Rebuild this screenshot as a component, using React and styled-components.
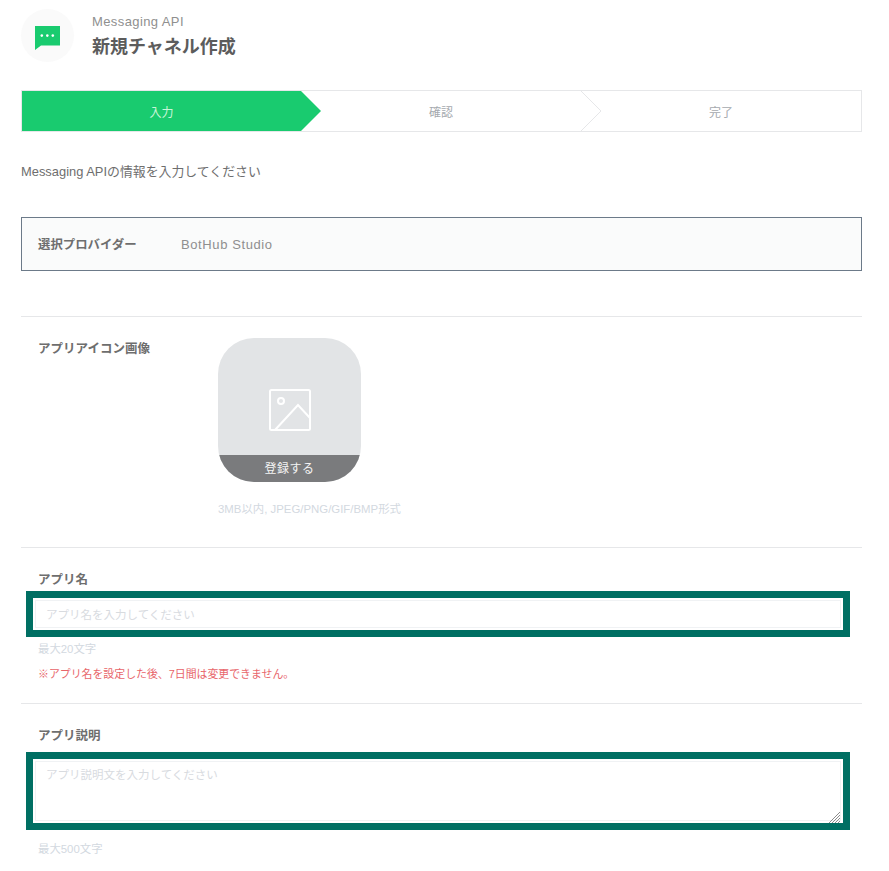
import React from "react";
import styled, { createGlobalStyle } from "styled-components";

const GlobalStyle = createGlobalStyle`
  html, body {
    margin: 0;
    padding: 0;
    background: #fff;
    font-family: "Liberation Sans", "Noto Sans CJK JP", sans-serif;
    color: #555;
  }
  * { box-sizing: border-box; }
`;

const Page = styled.div`
  width: 889px;
  height: 871px;
  overflow: hidden;
  padding: 9px 27px 0 21px;
`;

const Header = styled.header`
  display: flex;
  align-items: flex-start;
  gap: 18px;
  height: 81px;
`;

const IconCircle = styled.div`
  width: 53px;
  height: 53px;
  padding-top: 4px;
  border-radius: 50%;
  background: #fafafa;
  display: flex;
  align-items: center;
  justify-content: center;
`;

const HeaderText = styled.div`
  display: flex;
  flex-direction: column;
  padding-top: 5px;
`;

const Service = styled.div`
  font-size: 13px;
  line-height: 16px;
  letter-spacing: 0.4px;
  color: #8f8f8f;
`;

const Title = styled.h1`
  margin: 4px 0 0;
  font-size: 18px;
  line-height: 26px;
  font-weight: 700;
  color: #5c5c5c;
`;

const Stepper = styled.div`
  display: flex;
  height: 42px;
  border: 1px solid #e6e7e9;
`;

const Step = styled.div`
  position: relative;
  flex: 0 0 ${({ $width }) => $width}px;
  display: flex;
  align-items: center;
  justify-content: center;
  font-size: 12px;
  color: ${({ $active }) => ($active ? "#c9f5d9" : "#a5a9ae")};
  background: ${({ $active }) => ($active ? "#19cb6f" : "transparent")};
`;

const StepTip = styled.svg`
  position: absolute;
  top: 0;
  left: 100%;
  width: 20px;
  height: 40px;
  z-index: 1;
`;

const Intro = styled.p`
  margin: 31px 0 0;
  font-size: 12.9px;
  line-height: 18px;
  color: #6e6e6e;
`;

const ProviderBox = styled.div`
  margin-top: 36px;
  height: 54px;
  display: flex;
  align-items: center;
  padding-left: 16px;
  border: 1px solid #6c7a89;
  background: #fafbfb;
`;

const ProviderLabel = styled.div`
  width: 143px;
  font-size: 12.4px;
  font-weight: 700;
  color: #6e6e6e;
`;

const ProviderName = styled.div`
  font-size: 13px;
  letter-spacing: 0.6px;
  color: #8f8f8f;
`;

const Section = styled.section`
  border-top: 1px solid #e6e7e9;
  padding-left: 17px;
  margin-top: ${({ $top }) => $top}px;
`;

const IconRow = styled.div`
  display: flex;
  padding-top: 21px;
  height: 230px;
`;

const FieldLabel = styled.div`
  width: 180px;
  margin-top: ${({ $top }) => $top || 0}px;
  font-size: 12.5px;
  line-height: 20px;
  font-weight: 700;
  color: #6e6e6e;
`;

const UploadColumn = styled.div`
  display: flex;
  flex-direction: column;
`;

const Upload = styled.div`
  position: relative;
  width: 143px;
  height: 144px;
  border-radius: 36px;
  background: #e2e4e6;
  overflow: hidden;
  display: flex;
  flex-direction: column;
`;

const UploadImage = styled.div`
  flex: 1;
  display: flex;
  align-items: center;
  justify-content: center;
  padding-top: 27px;
`;

const UploadBar = styled.div`
  height: 27px;
  padding-bottom: 2px;
  display: flex;
  align-items: center;
  justify-content: center;
  background: #7a7b7d;
  color: #f4f4f4;
  font-size: 12px;
  letter-spacing: 0.5px;
`;

const Hint = styled.div`
  margin-top: ${({ $top }) => $top || 0}px;
  font-size: 11.4px;
  line-height: 14px;
  color: #d3d9df;
`;

const Warning = styled.div`
  margin-top: 11px;
  font-size: 10.9px;
  line-height: 14px;
  color: #e8656a;
`;

const FieldBlock = styled.div`
  padding-top: 22px;
`;

const TextInput = styled.input`
  display: block;
  width: 810px;
  height: 32px;
  margin: ${({ $gap }) => $gap}px 0 0 -5px;
  padding: 1px 11px 0;
  border: 2px solid #fff;
  box-shadow: inset 0 0 0 1px #f0f2f4;
  outline: 7px solid #006f63;
  background: #fff;
  font-family: inherit;
  font-size: 11.5px;
  &::placeholder { color: #d8dbdf; }
`;

const TextAreaWrap = styled.div`
  position: relative;
  width: 810px;
  height: 64px;
  margin: ${({ $gap }) => $gap}px 0 0 -5px;
`;

const TextArea = styled.textarea`
  display: block;
  width: 100%;
  height: 100%;
  padding: 5px 11px;
  border: 2px solid #fff;
  box-shadow: inset 0 0 0 1px #f0f2f4;
  outline: 7px solid #006f63;
  background: #fff;
  resize: none;
  font-family: inherit;
  font-size: 11.5px;
  &::placeholder { color: #d8dbdf; }
`;

const ResizeHandle = styled.svg`
  position: absolute;
  right: 3px;
  bottom: 0;
  width: 11px;
  height: 11px;
`;

const ChatIcon = () => (
  <svg width="25" height="24" viewBox="0 0 25 24">
    <path d="M0 0H25V19.5H6L0 24Z" fill="#19cb6f" />
    <circle cx="6.8" cy="9.6" r="1.3" fill="#fff" />
    <circle cx="12.3" cy="9.6" r="1.3" fill="#fff" />
    <circle cx="17.8" cy="9.6" r="1.3" fill="#fff" />
  </svg>
);

const ImageIcon = () => (
  <svg width="42" height="42" viewBox="0 0 42 42" fill="none" stroke="#fff" strokeWidth="2">
    <rect x="1" y="1" width="40" height="40" rx="1.5" />
    <circle cx="12" cy="12" r="3" />
    <path d="M6 41L29 16L41 29" />
  </svg>
);

const HandleIcon = () => (
  <ResizeHandle viewBox="0 0 11 11" stroke="#8c8c8c" strokeWidth="1">
    <path d="M0 11L11 0M3 11L11 3M6 11L11 6M9 11L11 9" />
  </ResizeHandle>
);

export default function App() {
  return (
    <>
      <GlobalStyle />
      <Page>
        <Header>
          <IconCircle>
            <ChatIcon />
          </IconCircle>
          <HeaderText>
            <Service>Messaging API</Service>
            <Title>新規チャネル作成</Title>
          </HeaderText>
        </Header>

        <Stepper>
          <Step $active $width={279}>
            入力
            <StepTip viewBox="0 0 20 40">
              <path d="M0 0L20 20L0 40Z" fill="#19cb6f" />
            </StepTip>
          </Step>
          <Step $width={280}>
            確認
            <StepTip viewBox="0 0 20 40">
              <path d="M0 0L20 20L0 40" fill="#fff" stroke="#e6e7e9" />
            </StepTip>
          </Step>
          <Step $width={280}>完了</Step>
        </Stepper>

        <Intro>Messaging APIの情報を入力してください</Intro>

        <ProviderBox>
          <ProviderLabel>選択プロバイダー</ProviderLabel>
          <ProviderName>BotHub Studio</ProviderName>
        </ProviderBox>

        <Section $top={45}>
          <IconRow>
            <FieldLabel $top={1}>アプリアイコン画像</FieldLabel>
            <UploadColumn>
              <Upload>
                <UploadImage>
                  <ImageIcon />
                </UploadImage>
                <UploadBar>登録する</UploadBar>
              </Upload>
              <Hint $top={20}>3MB以内, JPEG/PNG/GIF/BMP形式</Hint>
            </UploadColumn>
          </IconRow>
        </Section>

        <Section $top={0}>
          <FieldBlock>
            <FieldLabel>アプリ名</FieldLabel>
            <TextInput $gap={8} placeholder="アプリ名を入力してください" />
            <Hint $top={12}>最大20文字</Hint>
            <Warning>※アプリ名を設定した後、7日間は変更できません。</Warning>
          </FieldBlock>
        </Section>

        <Section $top={22}>
          <FieldBlock>
            <FieldLabel>アプリ説明</FieldLabel>
            <TextAreaWrap $gap={13}>
              <TextArea placeholder="アプリ説明文を入力してください" />
              <HandleIcon />
            </TextAreaWrap>
            <Hint $top={19}>最大500文字</Hint>
          </FieldBlock>
        </Section>
      </Page>
    </>
  );
}
